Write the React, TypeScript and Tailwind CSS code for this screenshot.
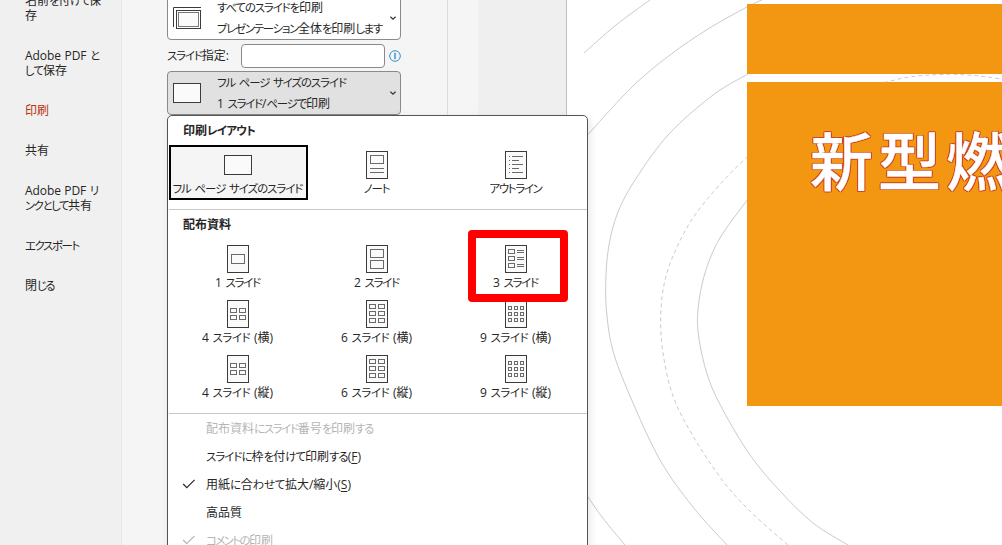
import React, { useLayoutEffect, useRef, useState } from 'react';

interface FitTextProps {
  text: string;
  width: number;
  className?: string;
  underlineKey?: string;
}

const KANA = /([\u3040-\u30ff]+)/;

const FitText: React.FC<FitTextProps> = ({ text, width, className, underlineKey }) => {
  const ref = useRef<HTMLSpanElement>(null);
  const [spacing, setSpacing] = useState(0);
  const parts = text.split(KANA).filter(Boolean);
  const kanaCount = parts.filter((p) => KANA.test(p)).join('').length;
  const tightenAll = kanaCount < 2;

  useLayoutEffect(() => {
    if (!ref.current) return;
    const natural = ref.current.getBoundingClientRect().width;
    setSpacing((width - 1 - natural) / (tightenAll ? text.length : kanaCount));
  }, []);

  return (
    <span ref={ref} className={`inline-block whitespace-pre [font-feature-settings:'palt'] [word-spacing:0.5px] ${className || ''}`}>
      {parts.map((part, i) => {
        const isKana = KANA.test(part);
        const style = isKana || tightenAll ? { letterSpacing: `${spacing}px` } : undefined;
        return (
          <span key={i} style={style} className={isKana ? 'text-[0.95em]' : ''}>
            {underlineKey && part.includes(underlineKey) ? (
              <>
                {part.split(underlineKey)[0]}
                <u className="underline-offset-2">{underlineKey}</u>
                {part.split(underlineKey)[1]}
              </>
            ) : (
              part
            )}
          </span>
        );
      })}
    </span>
  );
};

const navItems: { lines: [string, number][]; active?: boolean }[] = [
  { lines: [['名前を付けて保', 77], ['存', 13]] },
  { lines: [['Adobe PDF と', 76], ['して保存', 43]] },
  { lines: [['印刷', 25]], active: true },
  { lines: [['共有', 25]] },
  { lines: [['Adobe PDF リ', 75], ['ンクとして共有', 68]] },
  { lines: [['エクスポート', 55]] },
  { lines: [['閉じる', 30]] },
];

const Sidebar = () => (
  <aside className="flex w-[122px] shrink-0 flex-col gap-[25px] border-r border-[#e9e9e9] bg-[#f0f0f0] pl-[25px]">
    {navItems.map((item, i) => (
      <div key={i} className={`flex flex-col items-start leading-[15px] ${i === 0 ? '-mt-[7px]' : ''} ${item.active ? 'text-[#b7300f]' : ''}`}>
        {item.lines.map(([text, width]) => (
          <FitText key={text} text={text} width={width} />
        ))}
      </div>
    ))}
  </aside>
);

const Chevron = () => (
  <svg width="8" height="6" viewBox="0 0 8 6" fill="none" stroke="#333" strokeWidth="1.2">
    <path d="M1.4 1.8 4 4.2 6.6 1.8" />
  </svg>
);

const LandscapeIcon = () => (
  <svg width="28" height="20" viewBox="0 0 28 20">
    <rect x="0.5" y="0.5" width="27" height="19" fill="#fafafa" stroke="#3b3b3b" />
  </svg>
);

const StackIcon = () => (
  <svg width="28" height="24" viewBox="0 0 28 24" fill="none" stroke="#3b3b3b">
    <path d="M28 1.5H0.5V21" />
    <rect x="3.5" y="4.5" width="24" height="18" fill="#fff" />
    <rect x="5.5" y="6.5" width="20" height="14" fill="#fafafa" stroke="#777" />
  </svg>
);

interface SelectProps {
  icon: React.ReactNode;
  lines: [string, number][];
  className: string;
}

const Select: React.FC<SelectProps> = ({ icon, lines, className }) => (
  <button className={`flex h-11 w-[234px] items-center rounded-[4px] border border-[#8a8a8a] pl-[5px] pr-[3px] text-left ${className}`}>
    {icon}
    <span className="ml-4 flex flex-1 flex-col items-start leading-[21px]">
      {lines.map(([text, width]) => (
        <FitText key={text} text={text} width={width} />
      ))}
    </span>
    <Chevron />
  </button>
);

// Top left corners of the small frames drawn inside a page icon
const frames = (xs: number[], ys: number[], w: number, h: number) =>
  ys.flatMap((y) => xs.map((x) => <rect key={`${x}-${y}`} x={x + 0.5} y={y + 0.5} width={w - 1} height={h - 1} />));

const pageContent: Record<string, React.ReactNode> = {
  note: (
    <>
      <rect x="4.5" y="4.5" width="13" height="8" />
      <path d="M4 17.5H18M4 21.5H18" />
    </>
  ),
  outline: (
    <>
      <path d="M4 5.5H5M4 9.5H5M4 13.5H5M4 17.5H5M4 21.5H5" />
      <path d="M7 5.5H18M7 9.5H14M7 13.5H18M7 17.5H14M7 21.5H18" />
    </>
  ),
  one: frames([4], [9], 14, 10),
  two: frames([4], [4, 15], 14, 9),
  three: (
    <>
      {frames([3], [4, 11, 18], 7, 5)}
      <path d="M12 5.5H19M12 7.5H19M12 12.5H19M12 14.5H19M12 19.5H19M12 21.5H19" />
    </>
  ),
  four: frames([3, 12], [8, 15], 7, 5),
  six: frames([3, 12], [4, 11, 18], 7, 5),
  nine: frames([3, 9, 15], [6, 12, 18], 4, 4),
};

const PageIcon = ({ kind }: { kind: string }) => (
  <svg width="22" height="28" viewBox="0 0 22 28">
    <rect x="0.5" y="0.5" width="21" height="27" fill="#fafafa" stroke="#3b3b3b" />
    <g fill="none" stroke="#6a6a6a">{pageContent[kind]}</g>
  </svg>
);

interface Layout {
  label: string;
  width: number;
  kind: string;
  selected?: boolean;
  marked?: boolean;
}

const printLayouts: Layout[] = [
  { label: 'フル ページ サイズのスライド', width: 131, kind: 'full', selected: true },
  { label: 'ノート', width: 27, kind: 'note' },
  { label: 'アウトライン', width: 53, kind: 'outline' },
];

const handouts: Layout[] = [
  { label: '1 スライド', width: 46, kind: 'one' },
  { label: '2 スライド', width: 46, kind: 'two' },
  { label: '3 スライド', width: 46, kind: 'three', marked: true },
  { label: '4 スライド (横)', width: 72, kind: 'four' },
  { label: '6 スライド (横)', width: 72, kind: 'six' },
  { label: '9 スライド (横)', width: 72, kind: 'nine' },
  { label: '4 スライド (縦)', width: 72, kind: 'four' },
  { label: '6 スライド (縦)', width: 72, kind: 'six' },
  { label: '9 スライド (縦)', width: 72, kind: 'nine' },
];

const LayoutGrid = ({ items }: { items: Layout[] }) => (
  <div className="ml-px grid w-[417px] grid-cols-3">
    {items.map((item) => (
      <div
        key={item.label}
        className={`relative flex h-[55px] flex-col items-center border-2 pr-0.5 pt-1 ${item.selected ? 'border-black bg-[#f5f5f5]' : 'border-transparent'}`}
      >
        <div className="flex h-7 shrink-0 items-center">{item.kind === 'full' ? <LandscapeIcon /> : <PageIcon kind={item.kind} />}</div>
        <FitText text={item.label} width={item.width} className="leading-[20px]" />
        {item.marked && <div className="absolute left-[19px] -top-[11px] z-10 h-[72px] w-[100px] rounded-[4px] border-8 border-[#ff0000]" />}
      </div>
    ))}
  </div>
);

const options = [
  { label: '配布資料にスライド番号を印刷する', width: 168, disabled: true },
  { label: 'スライドに枠を付けて印刷する(F)', width: 156, hotkey: 'F' },
  { label: '用紙に合わせて拡大/縮小(S)', width: 146, hotkey: 'S', checked: true },
  { label: '高品質', width: 37 },
  { label: 'コメントの印刷', width: 68, disabled: true, checked: true },
];

const LayoutMenu = () => (
  <div className="absolute left-[167px] top-[115px] h-[460px] w-[421px] rounded-[5px] border border-[#555] bg-white shadow-[2px_3px_8px_rgba(0,0,0,0.1)]">
    <h3 className="h-[29px] pl-[15px] font-bold leading-[29px]">
      <FitText text="印刷レイアウト" width={73} />
    </h3>
    <LayoutGrid items={printLayouts} />
    <hr className="ml-px mt-[9px] border-[#c8c8c8]" />
    <h3 className="h-[29px] pl-[15px] font-bold leading-[29px]">
      <FitText text="配布資料" width={49} />
    </h3>
    <LayoutGrid items={handouts} />
    <hr className="ml-px mt-[9px] border-[#c8c8c8]" />
    <ul>
      {options.map((o) => (
        <li key={o.label} className={`flex h-7 items-center ${o.disabled ? 'text-[#b5b5b5]' : ''}`}>
          <span className="flex w-[38px] pl-[14px]">
            {o.checked && (
              <svg width="14" height="10" viewBox="0 0 14 10" fill="none" stroke="currentColor" strokeWidth="1.2">
                <path d="M1.2 5 4.8 8.6 12.6 0.9" />
              </svg>
            )}
          </span>
          <FitText text={o.label} width={o.width} underlineKey={o.hotkey} className="mt-0.5" />
        </li>
      ))}
    </ul>
  </div>
);

type Point = [number, number];

// Smooth path through a list of points
const curve = (p: Point[]) =>
  p.slice(0, -1).reduce((d, cur, i) => {
    const prev = p[i - 1] || cur;
    const next = p[i + 1];
    const after = p[i + 2] || next;
    const c1 = [cur[0] + (next[0] - prev[0]) / 6, cur[1] + (next[1] - prev[1]) / 6];
    const c2 = [next[0] - (after[0] - cur[0]) / 6, next[1] - (after[1] - cur[1]) / 6];
    return `${d}C${c1} ${c2} ${next}`;
  }, `M${p[0]}`);

const rings: { points: Point[]; dashed?: boolean }[] = [
  { points: [[584, 53], [616, 25], [650, 0]] },
  { points: [[764, -1], [747, 7], [708, 29], [670, 55], [633, 86], [592, 130], [586, 137]] },
  { points: [[748, 74], [713, 95], [669, 134], [637, 177], [618, 212], [608.5, 248], [605.7, 285], [607, 316], [613, 351], [630, 396], [660, 460], [693, 507], [727, 545]] },
  { points: [[748, 156], [723, 181], [695, 215], [677, 247], [665, 280], [660.7, 316], [663, 353], [673, 396], [693, 436], [723, 481], [753, 514], [788, 545]], dashed: true },
  { points: [[884, 82.5], [913, 76.5], [950, 74.3], [980, 76], [1004, 79.5]], dashed: true },
  { points: [[748, 199], [720, 238], [705, 273], [698, 309], [699, 339], [708, 377], [723, 410], [750, 455], [780, 491], [813, 523], [848, 545]] },
  { points: [[586, 494], [602, 517], [625, 545]] },
];

const SlidePreview = () => (
  <main className="relative flex flex-1 flex-col gap-2 border-l border-[#c0c0c0] bg-white pl-[180px] pt-1">
    <svg className="absolute inset-0" width="435" height="545" viewBox="567 0 435 545" fill="none" stroke="#cbcbcb">
      {rings.map((ring, i) => (
        <path key={i} d={curve(ring.points)} strokeDasharray={ring.dashed ? '4 3' : undefined} />
      ))}
    </svg>
    <div className="relative h-[70px] bg-[#f39712]" />
    <div className="relative h-[324px] overflow-hidden bg-[#f39712] pl-[63px] pt-[33px]">
      <h1 className="w-[230px] whitespace-nowrap text-[63px] font-medium leading-[92px] tracking-[5px] text-white [-webkit-text-stroke:0.4px_white] [text-shadow:1.2px_0_#d0481f,-1.2px_0_#d0481f,0_1.2px_#d0481f,0_-1.2px_#d0481f,1px_1px_#d0481f,-1px_1px_#d0481f,1px_-1px_#d0481f,-1px_-1px_#d0481f]">
        新型燃
      </h1>
    </div>
  </main>
);

export default function App() {
  return (
    <div className="relative flex h-[545px] w-[1002px] overflow-hidden bg-[#f5f5f5] font-['Open_Sans','Noto_Sans_CJK_JP',sans-serif] text-[12px] text-[#262626]">
      <Sidebar />
      <section className="w-[326px] shrink-0 border-r border-[#dcdcdc] pl-[45px]">
        <Select
          className="-mt-1 bg-white"
          icon={<StackIcon />}
          lines={[['すべてのスライドを印刷', 107], ['プレゼンテーション全体を印刷します', 166]]}
        />
        <div className="flex h-[31px] items-center">
          <span className="w-[74px]">
            <FitText text="スライド指定:" width={63} />
          </span>
          <input className="h-6 w-36 rounded-[4px] border border-[#8a8a8a] bg-white" />
          <svg className="ml-1" width="12" height="12" viewBox="0 0 12 12" fill="none" stroke="#2f8dcb">
            <circle cx="6" cy="6" r="5.3" />
            <path d="M6 2.8V9.2" strokeWidth="1.4" />
          </svg>
        </div>
        <Select
          className="bg-[#e1e1e1]"
          icon={<LandscapeIcon />}
          lines={[['フル ページ サイズのスライド', 130], ['1 スライド/ページで印刷', 114]]}
        />
      </section>
      <div className="w-[30px] shrink-0" />
      <div className="w-[88px] shrink-0 bg-[#efefef]" />
      <SlidePreview />
      <LayoutMenu />
    </div>
  );
}
